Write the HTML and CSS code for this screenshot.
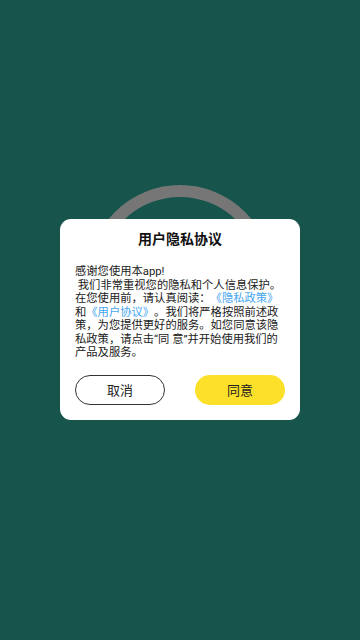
FILE: index.html
```html
<!DOCTYPE html>
<html>
<head>
  <meta charset="utf-8">
  <link rel="stylesheet" href="styles.css">
</head>
<body>
  <div id="screen">
    <!-- loading ring behind the dialog -->
    <svg class="ring" width="200" height="200" viewBox="0 0 200 200">
      <circle cx="100" cy="100" r="86" fill="none" stroke="#767676" stroke-width="12"/>
    </svg>

    <div id="dialog">
      <h2 class="title">用户隐私协议</h2>
      <div class="content">
        <span class="line">感谢您使用本app!</span>
        <span class="line">&nbsp;我们非常重视您的隐私和个人信息保护。</span>
        <span class="line">在您使用前，请认真阅读：<a class="link">《隐私政策》</a></span>
        <span class="line">和<a class="link">《用户协议》</a>。我们将严格按照前述政</span>
        <span class="line">策，为您提供更好的服务。如您同意该隐</span>
        <span class="line">私政策，请点击“同 意”并开始使用我们的</span>
        <span class="line">产品及服务。</span>
      </div>
      <div class="buttons">
        <button type="button" id="cancel">取消</button>
        <button type="button" id="agree">同意</button>
      </div>
    </div>
  </div>
</body>
</html>
```

FILE: styles.css
```css
/* full screen teal background with the dialog in the middle */
body {
  margin: 0;
  background-color: #17554c;
  font-family: Roboto, "Noto Sans CJK SC", sans-serif;
}

#screen {
  position: relative;
  width: 360px;
  height: 640px;
  padding-top: 219px;
  box-sizing: border-box;
}

.ring {
  position: absolute;
  left: 80px;
  top: 177px;
}

#dialog {
  position: relative;
  margin: 0 auto;
  width: 240px;
  box-sizing: border-box;
  padding: 10px 15px 15px;
  background-color: #fff;
  border-radius: 11px;
}

.title {
  margin: 0;
  text-align: center;
  font-size: 14px;
  font-weight: bold;
  line-height: 20px;
  color: #111;
}

.content {
  margin-top: 16px;
  font-size: 11.3px;
  line-height: 13.5px;
  color: #1a1a1a;
  text-spacing-trim: space-all;
}

.line {
  display: block;
  white-space: nowrap;
}

.link {
  color: #45a5f0;
}

.buttons {
  display: flex;
  justify-content: space-between;
  margin-top: 15px;
}

button {
  width: 90px;
  height: 30px;
  border-radius: 15px;
  font-family: inherit;
  font-size: 13px;
  color: #222;
  padding: 0;
}

#cancel {
  background-color: #fff;
  border: 1px solid #333;
}

#agree {
  background-color: #fde02a;
  border: none;
}
```
